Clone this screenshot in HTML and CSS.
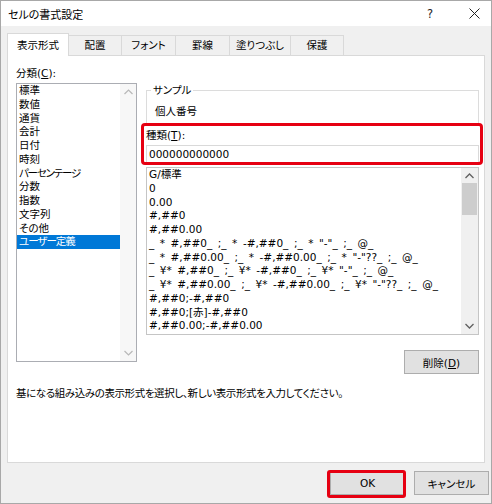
FILE: index.html
```html
<!DOCTYPE html>
<html lang="ja">
<head>
<meta charset="utf-8">
<link rel="stylesheet" href="styles.css">
</head>
<body>
<div class="dialog">
  <div class="titlebar">
    <span class="title">セルの書式設定</span>
    <span class="help">?</span>
    <svg class="close" width="11" height="11" viewBox="0 0 11 11"><path d="M0.5 0.5L10.5 10.5M10.5 0.5L0.5 10.5" stroke="#222" stroke-width="1" fill="none"/></svg>
  </div>
  <div class="body">
    <div class="tabs">
      <div class="tab active w62">表示形式</div>
      <div class="tab w53">配置</div>
      <div class="tab w54">フォント</div>
      <div class="tab w54">罫線</div>
      <div class="tab w61">塗りつぶし</div>
      <div class="tab w53">保護</div>
    </div>
    <div class="panel">
      <div class="cols">
        <div class="left">
          <div class="label">分類(<u>C</u>):</div>
          <div class="listbox cat">
            <ul class="items">
              <li>標準</li>
              <li>数値</li>
              <li>通貨</li>
              <li>会計</li>
              <li>日付</li>
              <li>時刻</li>
              <li class="tight2">パーセンテージ</li>
              <li>分数</li>
              <li>指数</li>
              <li>文字列</li>
              <li>その他</li>
              <li class="sel tight1">ユーザー定義</li>
            </ul>
            <div class="vscroll light">
              <svg class="arrow" width="9" height="6" viewBox="0 0 9 6"><path d="M0.5 5L4.5 1L8.5 5" stroke="#b8b8b8" stroke-width="1.2" fill="none"/></svg>
              <div class="track"></div>
              <svg class="arrow" width="9" height="6" viewBox="0 0 9 6"><path d="M0.5 1L4.5 5L8.5 1" stroke="#b8b8b8" stroke-width="1.2" fill="none"/></svg>
            </div>
          </div>
        </div>
        <div class="right">
          <div class="group">
            <span class="legend">サンプル</span>
            <div class="sample-val">個人番号</div>
          </div>
          <div class="label type-label">種類(<u>T</u>):</div>
          <div class="input">000000000000</div>
          <div class="listbox fmt">
            <ul class="items">
              <li>G/標準</li>
              <li>0</li>
              <li>0.00</li>
              <li>#,##0</li>
              <li>#,##0.00</li>
              <li>_ * #,##0_ ;_ * -#,##0_ ;_ * "-"_ ;_ @_</li>
              <li>_ * #,##0.00_ ;_ * -#,##0.00_ ;_ * "-"??_ ;_ @_</li>
              <li>_ ¥* #,##0_ ;_ ¥* -#,##0_ ;_ ¥* "-"_ ;_ @_</li>
              <li>_ ¥* #,##0.00_ ;_ ¥* -#,##0.00_ ;_ ¥* "-"??_ ;_ @_</li>
              <li>#,##0;-#,##0</li>
              <li>#,##0;[赤]-#,##0</li>
              <li>#,##0.00;-#,##0.00</li>
            </ul>
            <div class="vscroll">
              <svg class="arrow" width="9" height="6" viewBox="0 0 9 6"><path d="M0.5 5L4.5 1L8.5 5" stroke="#606060" stroke-width="1.3" fill="none"/></svg>
              <div class="track"><div class="thumb"></div></div>
              <svg class="arrow" width="9" height="6" viewBox="0 0 9 6"><path d="M0.5 1L4.5 5L8.5 1" stroke="#606060" stroke-width="1.3" fill="none"/></svg>
            </div>
          </div>
          <div class="del-row"><button class="btn">削除(<u>D</u>)</button></div>
        </div>
      </div>
      <p class="desc">基になる組み込みの表示形式を選択し、新しい表示形式を入力してください。</p>
    </div>
    <div class="footer">
      <button class="btn">OK</button>
      <button class="btn">キャンセル</button>
    </div>
  </div>
  <div class="mark mark-type"></div>
  <div class="mark mark-ok"></div>
</div>
</body>
</html>
```

FILE: styles.css
```css
* { box-sizing: border-box; }
html, body { margin: 0; padding: 0; background: #fff; }
body {
  font-family: "DejaVu Sans", "Noto Sans CJK JP", sans-serif;
  font-size: 10.5px;
  font-feature-settings: "palt";
  color: #000;
}
.dialog {
  position: relative;
  width: 492px;
  height: 504px;
  border: 1px solid #a8a8a8;
  background: #f0f0f0;
  display: flex;
  flex-direction: column;
}
.titlebar {
  height: 25px;
  background: #fff;
  display: flex;
  align-items: center;
  padding: 0 0 0 7px;
}
.title { font-size: 11px; flex: 1; }
.help { font-size: 11.5px; margin-right: 36px; color: #222; }
.close { margin-right: 11px; }
.body {
  flex: 1;
  padding: 7px 6px 0 6px;
  display: flex;
  flex-direction: column;
}
.tabs {
  display: flex;
  align-items: flex-end;
  height: 22px;
}
.tab {
  height: 20px;
  line-height: 19px;
  text-align: center;
  border: 1px solid #d9d9d9;
  border-bottom: none;
  border-left: none;
  background: #f0f0f0;
}
.tab.active {
  height: 23px;
  line-height: 22px;
  border-left: 1px solid #d9d9d9;
  background: #fff;
  margin-bottom: -1px;
  position: relative;
  z-index: 1;
}
.w62 { width: 62px; }
.w53 { width: 53px; }
.w54 { width: 54px; }
.w61 { width: 61px; }
.panel {
  height: 408px;
  background: #fff;
  border: 1px solid #d9d9d9;
  padding: 10px 5px 0 8px;
}
.cols { display: flex; gap: 9px; }
.left { width: 121px; }
.right { flex: 1; }
.label { line-height: 14px; height: 14px; margin-bottom: 3px; }
u { text-decoration: underline; text-underline-offset: 1px; }
.listbox {
  border: 1px solid #abadb3;
  display: flex;
  background: #fff;
}
.listbox.cat { height: 279px; }
.items {
  list-style: none;
  margin: 0;
  padding: 0;
  flex: 1;
  overflow: hidden;
}
.items li {
  height: 13.75px;
  line-height: 13.75px;
  padding-left: 2px;
  white-space: nowrap;
}
.items li.sel { background: #0078d7; color: #fff; }
.items li.tight1 { letter-spacing: -1px; }
.items li.tight2 { letter-spacing: -1.2px; }
.fmt .items li { word-spacing: 2.2px; }
.vscroll {
  width: 16px;
  display: flex;
  flex-direction: column;
  align-items: center;
  background: #f0f0f0;
}
.vscroll.light { background: #f7f7f7; }
.vscroll .arrow { margin: 5px 0; flex: none; }
.vscroll .track { flex: 1; width: 100%; padding: 0 1px; }
.thumb { height: 32px; background: #cdcdcd; margin-top: -1px; }
.group {
  margin-top: 24px;
  border: 1px solid #dcdcdc;
  height: 34px;
  padding-left: 4px;
  line-height: 14px;
}
.legend {
  display: block;
  width: max-content;
  background: #fff;
  padding: 0 2px;
  line-height: 14px;
  margin-top: -8px;
}
.sample-val { line-height: 14px; margin-top: 7px; padding-left: 4px; }
.type-label { margin-top: 4px; margin-bottom: 3px; }
.input {
  height: 18px;
  border: 1px solid #d9d9d9;
  line-height: 16px;
  padding-left: 2px;
}
.listbox.fmt { height: 168px; margin-top: 4px; border-color: #c5c5c5; }
.fmt .vscroll { width: 17px; }
.del-row { display: flex; justify-content: flex-end; margin-top: 15px; }
.btn {
  font-family: inherit;
  font-size: 10.5px;
  font-feature-settings: "palt";
  color: #000;
  width: 75px;
  height: 24px;
  background: #e1e1e1;
  border: 1px solid #adadad;
  padding: 0;
}
.desc { margin: 12px 0 0 0; line-height: 14px; letter-spacing: -0.4px; }
.footer {
  display: flex;
  justify-content: flex-end;
  gap: 9px;
  padding: 8px 0 0 0;
  margin-right: -4px;
}
.mark {
  position: absolute;
  border: 3px solid #e60012;
  border-radius: 4px;
  z-index: 5;
}
.mark-type { left: 140px; top: 122px; width: 342px; height: 42px; }
.mark-ok { left: 326px; top: 469px; width: 79px; height: 28px; border-radius: 3px; }
```
